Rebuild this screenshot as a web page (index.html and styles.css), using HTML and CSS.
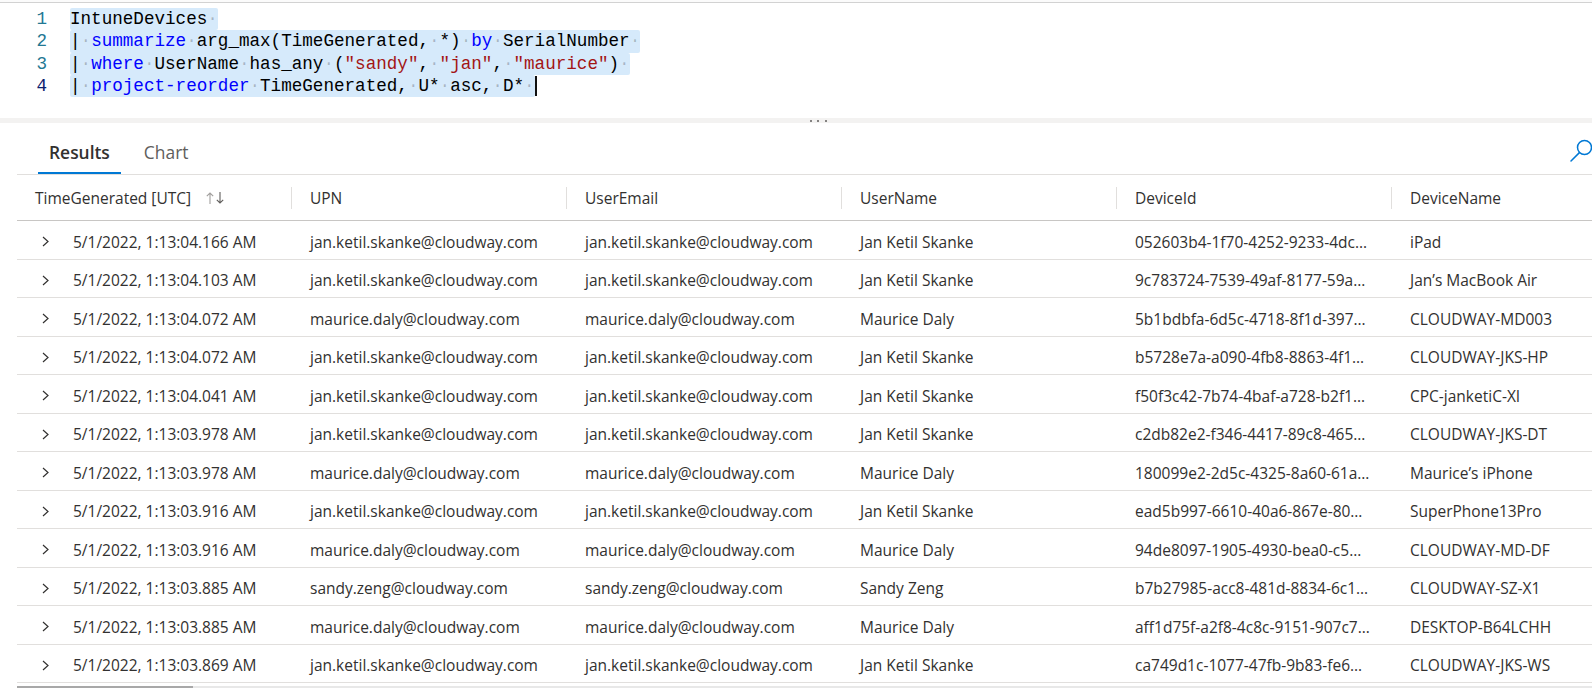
FILE: index.html
```html
<!DOCTYPE html>
<html>
<head>
<meta charset="utf-8">
<link rel="stylesheet" href="styles.css">
</head>
<body>
<div class="page">
  <div class="topline"></div>
  <div class="editor">
    <div class="line"><span class="ln">1</span><span class="code"><span class="sel">IntuneDevices<span class="ws">·</span></span></span></div>
    <div class="line"><span class="ln">2</span><span class="code"><span class="sel">|<span class="ws">·</span><span class="kw">summarize</span><span class="ws">·</span>arg_max(TimeGenerated,<span class="ws">·</span>*)<span class="ws">·</span><span class="kw">by</span><span class="ws">·</span>SerialNumber<span class="ws">·</span></span></span></div>
    <div class="line"><span class="ln">3</span><span class="code"><span class="sel">|<span class="ws">·</span><span class="kw">where</span><span class="ws">·</span>UserName<span class="ws">·</span>has_any<span class="ws">·</span>(<span class="str">"sandy"</span>,<span class="ws">·</span><span class="str">"jan"</span>,<span class="ws">·</span><span class="str">"maurice"</span>)<span class="ws">·</span></span></span></div>
    <div class="line"><span class="ln active">4</span><span class="code"><span class="sel">|<span class="ws">·</span><span class="kw">project-reorder</span><span class="ws">·</span>TimeGenerated,<span class="ws">·</span>U*<span class="ws">·</span>asc,<span class="ws">·</span>D*<span class="ws">·</span></span><span class="cursor"></span></span></div>
  </div>
  <div class="splitter"><span class="dot"></span><span class="dot"></span><span class="dot"></span></div>
  <div class="results">
    <div class="tabbar">
      <div class="tabs">
        <div class="tab active">Results</div>
        <div class="tab">Chart</div>
      </div>
      <svg class="search" width="26" height="26" viewBox="0 0 26 26"><circle cx="16.5" cy="9.5" r="7" fill="none" stroke="#0078d4" stroke-width="1.5"/><path d="M3 23 L11.4 14.6" stroke="#0078d4" stroke-width="1.5" fill="none" stroke-linecap="round"/></svg>
    </div>
    <div class="grid">
      <div class="row head">
        <div class="hc"><span class="hl">TimeGenerated [UTC]<svg class="sort" width="20" height="14" viewBox="0 0 20 14"><path d="M4 13 V2 M0.8 5.2 L4 2 L7.2 5.2" stroke="#a19f9d" stroke-width="1.1" fill="none"/><path d="M14 1 V12 M10.8 8.8 L14 12 L17.2 8.8" stroke="#605e5c" stroke-width="1.1" fill="none"/></svg></span><span class="sep"></span></div>
        <div class="hc"><span class="hl">UPN</span><span class="sep"></span></div>
        <div class="hc"><span class="hl">UserEmail</span><span class="sep"></span></div>
        <div class="hc"><span class="hl">UserName</span><span class="sep"></span></div>
        <div class="hc"><span class="hl">DeviceId</span><span class="sep"></span></div>
        <div class="hc"><span class="hl">DeviceName</span><span class="sep"></span></div>
      </div>
      <div class="row"><div class="c first"><svg class="chev" width="7" height="11" viewBox="0 0 7 11"><path d="M1 1 L6 5.5 L1 10" stroke="#323130" stroke-width="1.2" fill="none"/></svg><span>5/1/2022, 1:13:04.166 AM</span></div><div class="c">jan.ketil.skanke@cloudway.com</div><div class="c">jan.ketil.skanke@cloudway.com</div><div class="c">Jan Ketil Skanke</div><div class="c">052603b4-1f70-4252-9233-4dc…</div><div class="c">iPad</div></div>
      <div class="row"><div class="c first"><svg class="chev" width="7" height="11" viewBox="0 0 7 11"><path d="M1 1 L6 5.5 L1 10" stroke="#323130" stroke-width="1.2" fill="none"/></svg><span>5/1/2022, 1:13:04.103 AM</span></div><div class="c">jan.ketil.skanke@cloudway.com</div><div class="c">jan.ketil.skanke@cloudway.com</div><div class="c">Jan Ketil Skanke</div><div class="c">9c783724-7539-49af-8177-59a…</div><div class="c">Jan’s MacBook Air</div></div>
      <div class="row"><div class="c first"><svg class="chev" width="7" height="11" viewBox="0 0 7 11"><path d="M1 1 L6 5.5 L1 10" stroke="#323130" stroke-width="1.2" fill="none"/></svg><span>5/1/2022, 1:13:04.072 AM</span></div><div class="c">maurice.daly@cloudway.com</div><div class="c">maurice.daly@cloudway.com</div><div class="c">Maurice Daly</div><div class="c">5b1bdbfa-6d5c-4718-8f1d-397…</div><div class="c">CLOUDWAY-MD003</div></div>
      <div class="row"><div class="c first"><svg class="chev" width="7" height="11" viewBox="0 0 7 11"><path d="M1 1 L6 5.5 L1 10" stroke="#323130" stroke-width="1.2" fill="none"/></svg><span>5/1/2022, 1:13:04.072 AM</span></div><div class="c">jan.ketil.skanke@cloudway.com</div><div class="c">jan.ketil.skanke@cloudway.com</div><div class="c">Jan Ketil Skanke</div><div class="c">b5728e7a-a090-4fb8-8863-4f1…</div><div class="c">CLOUDWAY-JKS-HP</div></div>
      <div class="row"><div class="c first"><svg class="chev" width="7" height="11" viewBox="0 0 7 11"><path d="M1 1 L6 5.5 L1 10" stroke="#323130" stroke-width="1.2" fill="none"/></svg><span>5/1/2022, 1:13:04.041 AM</span></div><div class="c">jan.ketil.skanke@cloudway.com</div><div class="c">jan.ketil.skanke@cloudway.com</div><div class="c">Jan Ketil Skanke</div><div class="c">f50f3c42-7b74-4baf-a728-b2f1…</div><div class="c">CPC-janketiC-XI</div></div>
      <div class="row"><div class="c first"><svg class="chev" width="7" height="11" viewBox="0 0 7 11"><path d="M1 1 L6 5.5 L1 10" stroke="#323130" stroke-width="1.2" fill="none"/></svg><span>5/1/2022, 1:13:03.978 AM</span></div><div class="c">jan.ketil.skanke@cloudway.com</div><div class="c">jan.ketil.skanke@cloudway.com</div><div class="c">Jan Ketil Skanke</div><div class="c">c2db82e2-f346-4417-89c8-465…</div><div class="c">CLOUDWAY-JKS-DT</div></div>
      <div class="row"><div class="c first"><svg class="chev" width="7" height="11" viewBox="0 0 7 11"><path d="M1 1 L6 5.5 L1 10" stroke="#323130" stroke-width="1.2" fill="none"/></svg><span>5/1/2022, 1:13:03.978 AM</span></div><div class="c">maurice.daly@cloudway.com</div><div class="c">maurice.daly@cloudway.com</div><div class="c">Maurice Daly</div><div class="c">180099e2-2d5c-4325-8a60-61a…</div><div class="c">Maurice’s iPhone</div></div>
      <div class="row"><div class="c first"><svg class="chev" width="7" height="11" viewBox="0 0 7 11"><path d="M1 1 L6 5.5 L1 10" stroke="#323130" stroke-width="1.2" fill="none"/></svg><span>5/1/2022, 1:13:03.916 AM</span></div><div class="c">jan.ketil.skanke@cloudway.com</div><div class="c">jan.ketil.skanke@cloudway.com</div><div class="c">Jan Ketil Skanke</div><div class="c">ead5b997-6610-40a6-867e-80…</div><div class="c">SuperPhone13Pro</div></div>
      <div class="row"><div class="c first"><svg class="chev" width="7" height="11" viewBox="0 0 7 11"><path d="M1 1 L6 5.5 L1 10" stroke="#323130" stroke-width="1.2" fill="none"/></svg><span>5/1/2022, 1:13:03.916 AM</span></div><div class="c">maurice.daly@cloudway.com</div><div class="c">maurice.daly@cloudway.com</div><div class="c">Maurice Daly</div><div class="c">94de8097-1905-4930-bea0-c5…</div><div class="c">CLOUDWAY-MD-DF</div></div>
      <div class="row"><div class="c first"><svg class="chev" width="7" height="11" viewBox="0 0 7 11"><path d="M1 1 L6 5.5 L1 10" stroke="#323130" stroke-width="1.2" fill="none"/></svg><span>5/1/2022, 1:13:03.885 AM</span></div><div class="c">sandy.zeng@cloudway.com</div><div class="c">sandy.zeng@cloudway.com</div><div class="c">Sandy Zeng</div><div class="c">b7b27985-acc8-481d-8834-6c1…</div><div class="c">CLOUDWAY-SZ-X1</div></div>
      <div class="row"><div class="c first"><svg class="chev" width="7" height="11" viewBox="0 0 7 11"><path d="M1 1 L6 5.5 L1 10" stroke="#323130" stroke-width="1.2" fill="none"/></svg><span>5/1/2022, 1:13:03.885 AM</span></div><div class="c">maurice.daly@cloudway.com</div><div class="c">maurice.daly@cloudway.com</div><div class="c">Maurice Daly</div><div class="c">aff1d75f-a2f8-4c8c-9151-907c7…</div><div class="c">DESKTOP-B64LCHH</div></div>
      <div class="row"><div class="c first"><svg class="chev" width="7" height="11" viewBox="0 0 7 11"><path d="M1 1 L6 5.5 L1 10" stroke="#323130" stroke-width="1.2" fill="none"/></svg><span>5/1/2022, 1:13:03.869 AM</span></div><div class="c">jan.ketil.skanke@cloudway.com</div><div class="c">jan.ketil.skanke@cloudway.com</div><div class="c">Jan Ketil Skanke</div><div class="c">ca749d1c-1077-47fb-9b83-fe6…</div><div class="c">CLOUDWAY-JKS-WS</div></div>
    </div>
    <div class="hscroll"><div class="thumb"></div></div>
  </div>
</div>
</body>
</html>
```
FILE: styles.css
```css
html, body {
  margin: 0;
  padding: 0;
  background: #ffffff;
}
body {
  width: 1592px;
  height: 688px;
  overflow: hidden;
  font-family: "Open Sans", "Noto Sans", sans-serif;
  color: #323130;
}
.page {
  display: flex;
  flex-direction: column;
  width: 1592px;
}
.topline {
  height: 2px;
  background: #fbfbfb;
  border-bottom: 1px solid #d2d2d2;
}
.editor {
  margin-top: 5px;
  display: flex;
  flex-direction: column;
  font-family: "Liberation Mono", "DejaVu Sans Mono", monospace;
  font-size: 17.6px;
  color: #000000;
}
.line {
  display: flex;
  height: 22.3px;
  line-height: 22.3px;
  align-items: center;
}
.ln {
  width: 47px;
  text-align: right;
  color: #237893;
  flex: none;
}
.ln.active {
  color: #0b216f;
}
.code {
  margin-left: 23px;
  display: flex;
  align-items: center;
  white-space: pre;
}
.sel {
  background: #d6eafb;
  height: 22.3px;
  border-radius: 2px;
}
.ws {
  color: rgba(0, 0, 0, 0.22);
}
.kw {
  color: #0000ff;
}
.str {
  color: #a31515;
}
.cursor {
  width: 2px;
  height: 20px;
  background: #111111;
}
.splitter {
  margin-top: 21px;
  height: 5px;
  background: #f3f2f1;
  display: flex;
  justify-content: center;
  align-items: center;
  gap: 5.5px;
  padding-left: 44px;
}
.dot {
  width: 2px;
  height: 2px;
  background: #605e5c;
  border-radius: 1px;
}
.results {
  margin-left: 17px;
  width: 1575px;
  display: flex;
  flex-direction: column;
  overflow: hidden;
}
.tabbar {
  height: 51px;
  border-bottom: 1px solid #e1dfdd;
  display: flex;
  justify-content: space-between;
}
.tabs {
  display: flex;
  padding-left: 21px;
}
.tab {
  padding: 9px 11px 0 11px;
  display: flex;
  align-items: center;
  font-size: 17.4px;
  color: #605e5c;
  margin-right: 12px;
  border-bottom: 2px solid transparent;
}
.tab.active {
  color: #323130;
  font-weight: 600;
  border-bottom-color: #0078d4;
}
.search {
  flex: none;
  margin-top: 15px;
  margin-right: -2px;
}
.grid {
  display: flex;
  flex-direction: column;
  font-size: 15.5px;
}
.row {
  display: grid;
  grid-template-columns: repeat(6, 275px);
  height: 38.5px;
  box-sizing: border-box;
  border-bottom: 1px solid #e1dfdd;
}
.row.head {
  height: 46px;
  border-bottom: 1px solid #c8c6c4;
}
.hc {
  display: flex;
  align-items: center;
  justify-content: space-between;
  padding-left: 18px;
  white-space: nowrap;
  color: #323130;
}
.hl {
  display: flex;
  align-items: center;
}
.sort {
  margin-left: 15px;
}
.sep {
  width: 1px;
  height: 22px;
  background: #e1dfdd;
}
.c {
  display: flex;
  align-items: center;
  padding-left: 18px;
  padding-top: 4px;
  white-space: nowrap;
  overflow: hidden;
  color: #323130;
}
.c.first {
  padding-left: 25px;
}
.chev {
  margin-right: 24px;
  flex: none;
}
.hscroll {
  margin-top: 3px;
  height: 2px;
  background: #e8e8e8;
}
.thumb {
  width: 176px;
  height: 2px;
  background: #a8a8a8;
}
```
